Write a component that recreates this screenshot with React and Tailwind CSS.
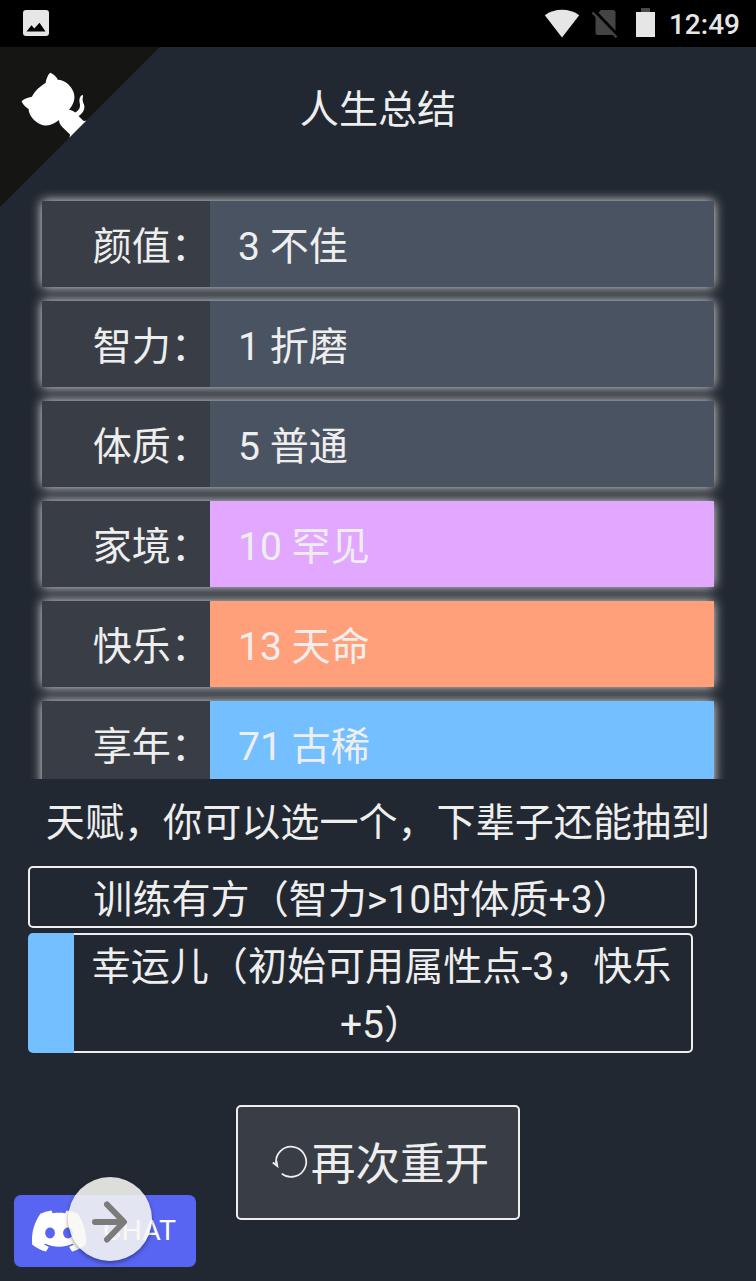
import React from 'react';
import { SiDiscord } from 'react-icons/si';

const stats = [
    { label: '颜值', value: '3 不佳', color: 'bg-[#4a5361]' },
    { label: '智力', value: '1 折磨', color: 'bg-[#4a5361]' },
    { label: '体质', value: '5 普通', color: 'bg-[#4a5361]' },
    { label: '家境', value: '10 罕见', color: 'bg-[#e2a7ff]' },
    { label: '快乐', value: '13 天命', color: 'bg-[#ffa07a]' },
    { label: '享年', value: '71 古稀', color: 'bg-[#74bfff]' },
];

function StatusBar() {
    return (
        <header className="flex h-[47px] shrink-0 items-center bg-black pl-[23px] pr-4 text-[#e6e6e6]">
            <svg className="-mt-px h-[26px] w-[26px]" viewBox="0 0 26 26">
                <rect width="26" height="26" rx="3" fill="#e6e6e6" />
                <path d="M3.5 21.5L8.5 15.3L11.3 18.6L16.5 12.8L22.5 21.5Z" fill="#000" />
            </svg>
            <div className="ml-auto flex items-center">
                {/* wifi */}
                <svg className="-mt-px h-[29px] w-[36px]" viewBox="0 0 36 29">
                    <path d="M18 28.5L0.8 6.2C10 -1.2 26 -1.2 35.2 6.2Z" fill="#e6e6e6" />
                </svg>
                {/* no sim */}
                <svg className="ml-[12px] h-[29px] w-[26px]" viewBox="0 0 26 29">
                    <path d="M9 1H21Q23.5 1 23.5 3.5V26H5.5Q3.5 26 3.5 24V6.5Z" fill="#444" />
                    <path d="M1.5 0.8L27 27.5" stroke="#000" strokeWidth="3" />
                    <path d="M0.5 3.5L24.5 28.2" stroke="#444" strokeWidth="2.2" />
                </svg>
                {/* battery */}
                <svg className="-mt-[2px] ml-[18px] h-[29px] w-[19px]" viewBox="0 0 19 29">
                    <rect x="5" width="9" height="4" fill="#4a4a4a" />
                    <rect y="4" width="19" height="25" fill="#e6e6e6" />
                </svg>
                <span className="ml-[14px] pt-[2px] text-[28px] font-medium leading-none">12:49</span>
            </div>
        </header>
    );
}

function GithubCorner() {
    return (
        <svg className="absolute left-0 top-[47px] h-[160px] w-[160px] -scale-x-100 text-white" viewBox="0 0 250 250">
            <path d="M0,0 L115,115 L130,115 L142,142 L250,250 L250,0 Z" fill="#151513" />
            <path
                d="M128.3,109.0 C113.8,99.7 119.0,89.6 119.0,89.6 C122.0,82.7 120.5,78.6 120.5,78.6 C119.2,72.0 123.4,76.3 123.4,76.3 C127.3,80.9 125.5,87.3 125.5,87.3 C122.9,97.6 130.6,101.9 134.4,103.2"
                fill="currentColor"
            />
            <path
                d="M115.0,115.0 C114.9,115.1 118.7,116.5 119.8,115.4 L133.7,101.6 C136.9,99.2 139.9,98.4 142.2,98.6 C133.8,88.0 127.5,74.4 143.8,58.0 C148.5,53.4 154.0,51.2 159.7,51.0 C160.3,49.4 163.2,43.6 171.4,40.1 C171.4,40.1 176.1,42.5 178.8,56.2 C183.1,58.6 187.2,61.8 190.9,65.4 C194.5,69.0 197.7,73.2 200.1,77.6 C213.8,80.2 216.3,84.9 216.3,84.9 C212.7,93.1 206.9,96.0 205.4,96.6 C205.1,102.4 203.0,107.8 198.3,112.5 C181.9,128.9 168.3,122.5 157.7,114.1 C157.9,116.9 156.7,120.9 152.7,124.9 L141.0,136.5 C139.8,137.7 141.6,141.9 141.8,141.8 Z"
                fill="currentColor"
            />
        </svg>
    );
}

export default function App() {
    return (
        <div className="relative flex h-[1281px] w-[756px] flex-col overflow-hidden bg-[#222831] font-[Roboto,'Noto_Sans_CJK_SC',sans-serif] text-[39.1px] leading-[58px] text-[#eeeeee]">
            <StatusBar />
            <GithubCorner />

            <h1 className="mt-[34px] text-center">人生总结</h1>

            <ul className="mt-[48px] flex h-[592px] shrink-0 flex-col gap-[14px] overflow-hidden px-[42px] pt-[14px]">
                {stats.map((s) => (
                    <li key={s.label} className="flex h-[86px] shrink-0 rounded-[2px] shadow-[0_0_12px_#eeeeee]">
                        <span className="flex w-[168px] items-center justify-end rounded-l-[2px] bg-[#393e46] pt-[6px]">{s.label}：</span>
                        <span className={`flex flex-1 items-center rounded-r-[1px] pl-[28px] pt-[6px] ${s.color}`}>{s.value}</span>
                    </li>
                ))}
            </ul>

            <h2 className="mt-[15px] text-center">天赋，你可以选一个，下辈子还能抽到</h2>

            <ul className="mt-[14px] flex flex-col items-start gap-[5px] pl-[28px] text-center">
                <li className="h-[62px] w-[669px] rounded-[5px] border-2 border-[#eeeeee] pt-[3px]">训练有方（智力&gt;10时体质+3）</li>
                {/* selected talent */}
                <li className="flex h-[120px] w-[665px]">
                    <span className="w-[46px] shrink-0 rounded-l-[5px] bg-[#74bfff]" />
                    <span className="flex-1 rounded-r-[5px] border-2 border-l-0 border-[#eeeeee] pl-[10px] pr-[12px] pt-[3px]">
                        幸运儿（初始可用属性点-3，快乐+5）
                    </span>
                </li>
            </ul>

            <button className="mx-auto mt-[52px] flex h-[115px] w-[284px] shrink-0 items-center justify-center rounded-[5px] border-2 border-[#eeeeee] bg-[#393e46] pl-[5px] pt-[4px] text-[44.6px]">
                <svg className="-mt-[7px] mr-[3px] h-[36px] w-[36px]" viewBox="0 0 37 36" fill="none" stroke="#eeeeee">
                    <path d="M4.3 21A15.5 15.5 0 1 1 10 31" strokeWidth="1.8" />
                    <path d="M0.8 19.5L5.5 23.2L4.6 18" strokeWidth="1.8" />
                </svg>
                再次重开
            </button>

            {/* chat badge */}
            <div className="absolute bottom-[14px] left-[14px] flex h-[72px] w-[182px] items-center rounded-[7px] bg-[#5865f2] pl-[18px] text-[28.5px] text-white">
                <SiDiscord size={54} />
                <span className="ml-[17px]">CHAT</span>
            </div>

            {/* floating assist button */}
            <div className="absolute bottom-[20px] left-[68px] flex h-[84px] w-[84px] items-center justify-center rounded-full bg-[#f7f7f3]/88 shadow-[0_2px_4px_rgba(0,0,0,0.4)]">
                <svg className="mt-[6px] h-[42px] w-[38px]" viewBox="0 0 38 42" fill="none" stroke="#7b7b7b" strokeWidth="6" strokeLinecap="round" strokeLinejoin="round">
                    <path d="M4 21H32M16 3.5L33 21L16 38.5" />
                </svg>
            </div>
        </div>
    );
}
